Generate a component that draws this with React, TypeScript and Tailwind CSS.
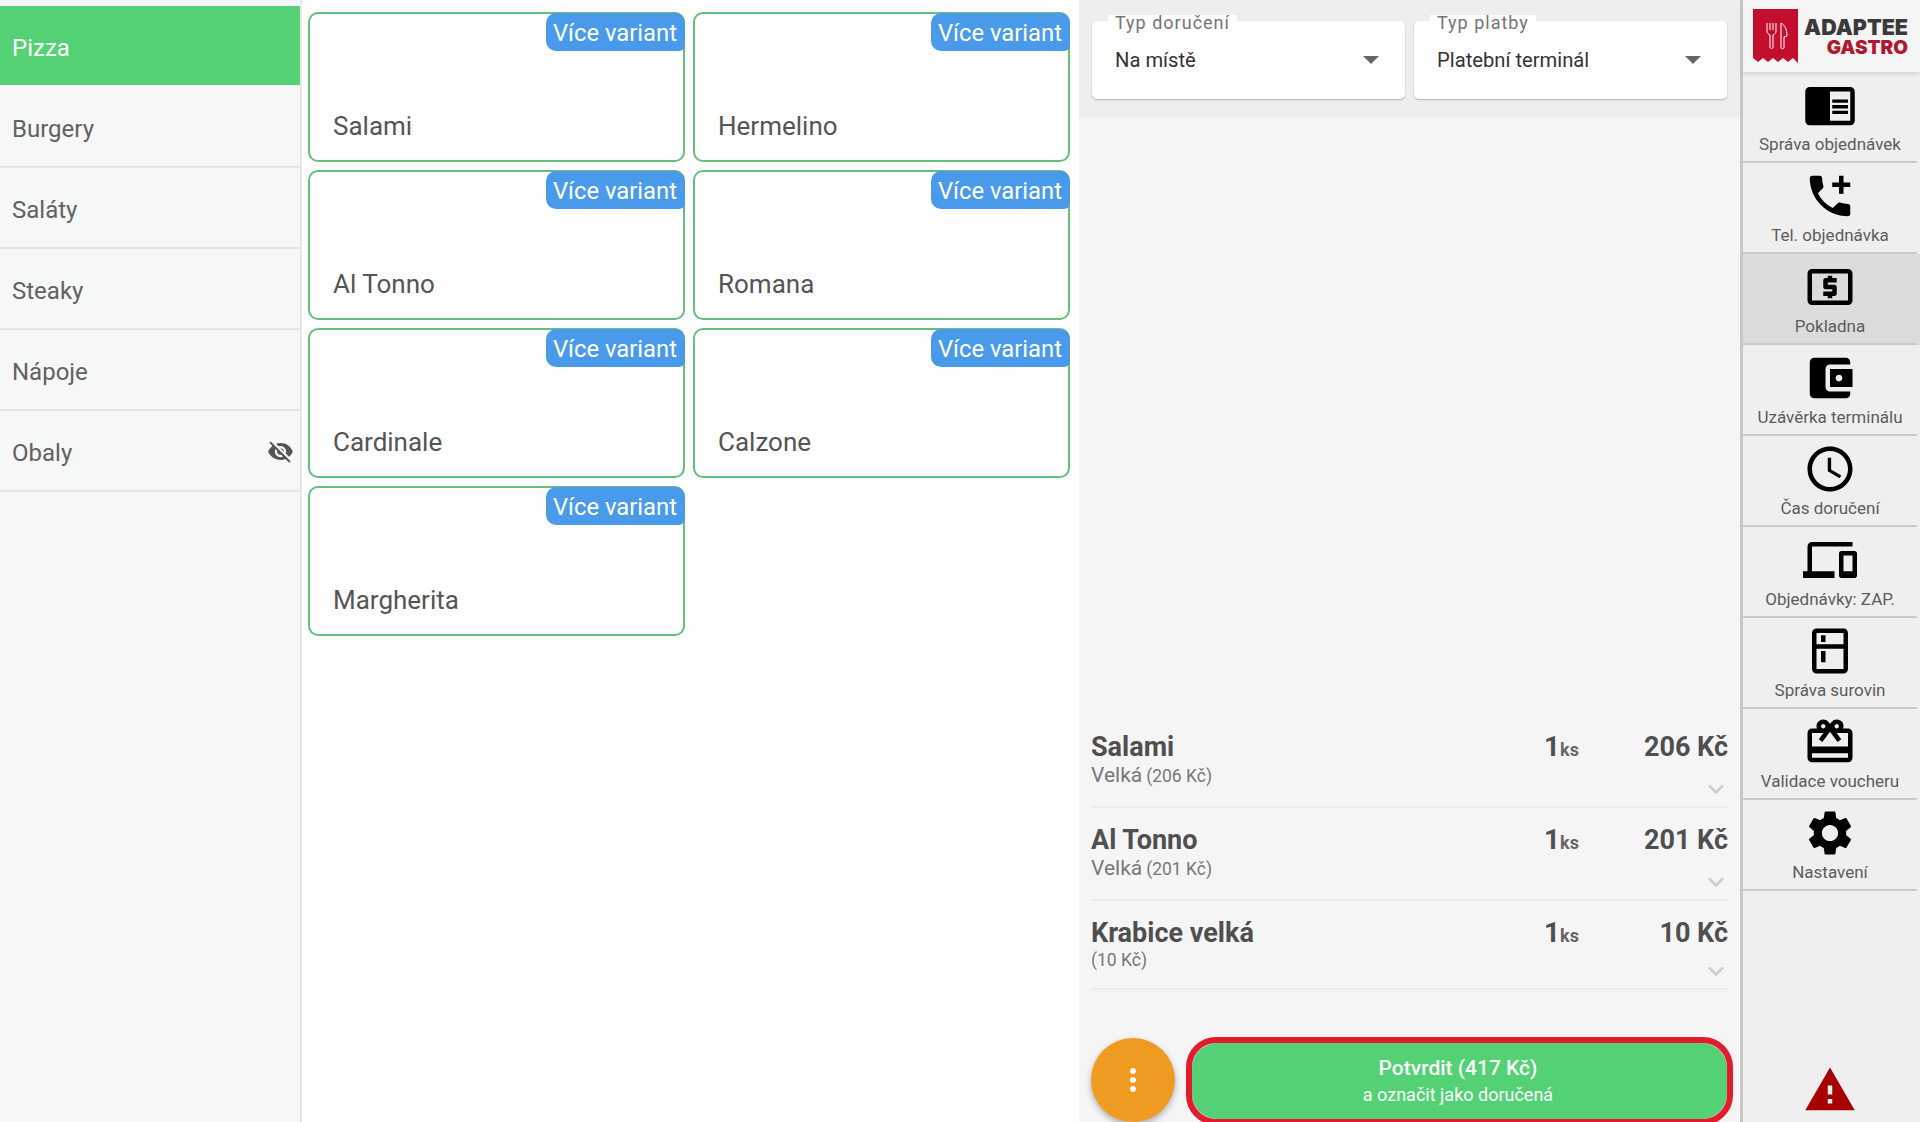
import {
  MdAccessTime,
  MdAccountBalanceWallet,
  MdAddIcCall,
  MdChromeReaderMode,
  MdDevices,
  MdKeyboardArrowDown,
  MdMoreVert,
  MdOutlineCardGiftcard,
  MdOutlineKitchen,
  MdOutlineLocalAtm,
  MdSettings,
  MdVisibilityOff,
  MdWarning,
} from "react-icons/md";

const categories = ["Pizza", "Burgery", "Saláty", "Steaky", "Nápoje", "Obaly"];
const pizzas = ["Salami", "Hermelino", "Al Tonno", "Romana", "Cardinale", "Calzone", "Margherita"];

const orderItems = [
  { name: "Salami", variant: "Velká", sub: "(206 Kč)", price: "206 Kč", height: "h-[93px]", subTop: "top-[46px]" },
  { name: "Al Tonno", variant: "Velká", sub: "(201 Kč)", price: "201 Kč", height: "h-[93px]", subTop: "top-[46px]" },
  { name: "Krabice velká", variant: "", sub: "(10 Kč)", price: "10 Kč", height: "h-[89px]", subTop: "top-[44px]" },
];

const navItems = [
  { label: "Správa objednávek", icon: MdChromeReaderMode },
  { label: "Tel. objednávka", icon: MdAddIcCall },
  { label: "Pokladna", icon: MdOutlineLocalAtm, active: true },
  { label: "Uzávěrka terminálu", icon: MdAccountBalanceWallet },
  { label: "Čas doručení", icon: MdAccessTime },
  { label: "Objednávky: ZAP.", icon: MdDevices },
  { label: "Správa surovin", icon: MdOutlineKitchen },
  { label: "Validace voucheru", icon: MdOutlineCardGiftcard },
  { label: "Nastavení", icon: MdSettings },
];

function CategoryList() {
  return (
    <aside className="w-[302px] shrink-0 pt-[6px] bg-[#f6f7f7] border-r-2 border-[#e6e6e6]">
      {categories.map((name, i) => (
        <div
          key={name}
          className={
            i === 0
              ? "h-[79px] flex items-center px-3 pt-[5px] text-[24px] bg-[#53d174] text-white mb-[2px]"
              : "h-[81px] flex items-center justify-between pl-3 pr-[6px] pt-[5px] text-[24px] text-[#616161] border-b-2 border-[#e3e3e3]"
          }
        >
          <span>{name}</span>
          {name === "Obaly" && <MdVisibilityOff className="text-[27px] text-[#555555] -mt-[4px]" />}
        </div>
      ))}
    </aside>
  );
}

function PizzaGrid() {
  return (
    <main className="w-[777px] shrink-0 bg-white pl-[6px] pt-3">
      <div className="grid grid-cols-[377px_377px] auto-rows-[150px] gap-[8px]">
        {pizzas.map((name) => (
          <div
            key={name}
            className="relative flex items-end px-[23px] pb-[17px] bg-white border-2 border-[#66bf7c] rounded-[10px] text-[#555555] text-[26px] leading-[34px]"
          >
            {name}
            <span className="absolute -top-[1px] -right-[2px] h-[38px] pl-[7px] pr-[8px] pt-[1px] flex items-center bg-[#4a9aec] text-white text-[23.8px] rounded-bl-[10px] rounded-tl-[10px] rounded-tr-[10px] rounded-br-[6px]">
              Více variant
            </span>
          </div>
        ))}
      </div>
    </main>
  );
}

function SelectBox({ label, value }: { label: string; value: string }) {
  return (
    <div className="relative w-[313px] h-[78px] bg-white rounded-[5px] shadow-[0_1px_2px_rgba(0,0,0,0.25)] flex items-center justify-between pl-[23px] pr-[26px]">
      <span className="text-[20.2px] text-[#333333] pt-[1px]">{value}</span>
      <span className="w-0 h-0 border-x-[8px] border-x-transparent border-t-[8px] border-t-[#666666]" />
      <span className="absolute left-[16px] -top-[6px] h-[14px] px-[7px] bg-white flex items-center text-[18px] tracking-[1px] text-[#757575]">
        {label}
      </span>
    </div>
  );
}

function OrderPanel() {
  return (
    <section className="w-[661px] shrink-0 bg-[#f6f5f6] flex flex-col">
      <div className="h-[117px] bg-[#eeeeef] flex gap-[9px] pl-[13px] pt-[21px]">
        <SelectBox label="Typ doručení" value="Na místě" />
        <SelectBox label="Typ platby" value="Platební terminál" />
      </div>
      <div className="flex-1 flex flex-col justify-end pl-3 pr-3 pb-[47px]">
        {orderItems.map((item) => (
          <div key={item.name} className={`${item.height} relative border-b-2 border-[#ececec] text-[#4f4f4f]`}>
            <div className="absolute left-0 top-[13px] text-[27px] leading-[38px] font-bold">{item.name}</div>
            <div className={`absolute left-0 ${item.subTop} text-[#777777] leading-[28px]`}>
              <span className="text-[21px]">{item.variant}</span>
              {item.variant && " "}
              <span className="text-[17.5px]">{item.sub}</span>
            </div>
            <div className="absolute left-[453px] top-[13px] leading-[38px] font-bold">
              <span className="text-[28px]">1</span>
              <span className="text-[18px] text-[#666666]">ks</span>
            </div>
            <div className="absolute right-0 top-[13px] text-[27px] leading-[38px] font-bold">{item.price}</div>
            <MdKeyboardArrowDown className="absolute right-[-4px] bottom-[1px] text-[32px] text-[#cccccc]" />
          </div>
        ))}
      </div>
      <div className="flex items-end pl-3 gap-[11px]">
        <div className="w-[84px] h-[84px] rounded-full bg-[#ef9a21] text-white flex items-center justify-center shadow-[0_3px_6px_rgba(0,0,0,0.3)]">
          <MdMoreVert className="text-[36px]" />
        </div>
        <div className="w-[547px] h-[88px] -mb-[3px] border-[6px] border-[#e31c2d] rounded-[30px] overflow-hidden bg-[#c8c8c8]">
          <div className="h-full bg-[#53d174] text-white rounded-[26px] flex flex-col items-center justify-center pr-[3px] pt-[1px]">
            <span className="text-[21px] leading-[26px] font-medium">Potvrdit (417 Kč)</span>
            <span className="text-[18px] leading-[28px]">a označit jako doručená</span>
          </div>
        </div>
      </div>
    </section>
  );
}

function Logo() {
  return (
    <div className="h-[72px] bg-[#f5f5f5] shadow-[0_2px_4px_rgba(0,0,0,0.12)] relative pl-[10px] pt-[9px] flex gap-[5px]">
      <svg viewBox="0 0 45 54" className="w-[45px] h-[54px] shrink-0">
        <path d="M0 0h45v54l-5-5-5 4-5-4-5 4-5-4-5 4-5-4-5 4-5-4z" fill="#c40e2e" />
        <path
          d="M14 14v8c0 2 1 3 3 4v12c0 2 3 2 3 0V26c2-1 3-2 3-4v-8M17 14v7M20 14v7M28 39V14c4 2 6 7 6 13l-3 1v11c0 1-3 1-3 0z"
          fill="none"
          stroke="#ffffff"
          strokeWidth="1"
        />
      </svg>
      <div className="font-['Inter',sans-serif] font-black flex flex-col items-end w-[105px] pt-[8px]">
        <span className="text-[21.5px] leading-[21px] text-[#3a3a3a]">ADAPTEE</span>
        <span className="text-[19px] leading-[19px] text-[#b01830]">GASTRO</span>
      </div>
    </div>
  );
}

function NavBar() {
  return (
    <nav className="flex-1 bg-[#efefef] border-l-[3px] border-[#c8c8c8] flex flex-col">
      <Logo />
      {navItems.map(({ label, icon: Icon, active }) => (
        <div key={label} className={active ? "bg-[#dcdcdc]" : ""}>
          <div className="h-[89px] pr-[3px] flex flex-col items-center overflow-hidden">
            <Icon className="text-[54px] text-black shrink-0 mt-[6px]" />
            <span className="text-[17px] leading-[22px] text-[#5c5c5c] whitespace-nowrap mt-[1px]">{label}</span>
          </div>
          <div className="h-[2px] mr-[3px] bg-[#c9c9c9]" />
        </div>
      ))}
      <div className="flex-1 flex items-end justify-center pr-[3px] pb-[5px]">
        <MdWarning className="text-[54px] text-[#a80000]" />
      </div>
    </nav>
  );
}

export default function App() {
  return (
    <div className="flex w-[1920px] h-[1122px] overflow-hidden font-['Roboto',sans-serif]">
      <CategoryList />
      <PizzaGrid />
      <OrderPanel />
      <NavBar />
    </div>
  );
}
